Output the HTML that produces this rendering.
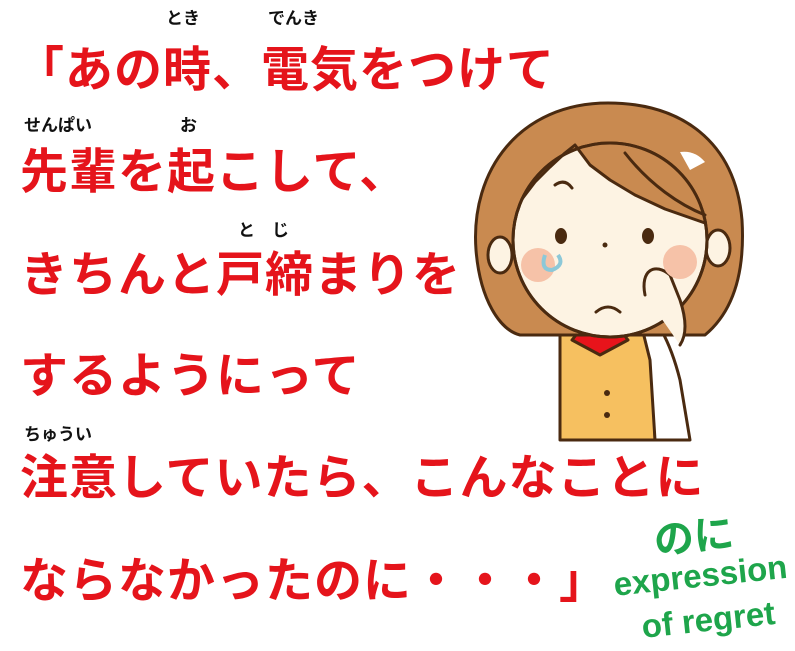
<!DOCTYPE html>
<html><head><meta charset="utf-8"><style>
body{margin:0;width:795px;height:651px;background:#fff;overflow:hidden;position:relative;font-family:"Liberation Sans","Noto Sans CJK JP",sans-serif}
.l{position:absolute;left:20px;font-size:48px;font-weight:bold;color:#e5141b;white-space:nowrap;line-height:1;letter-spacing:1px}
.f{position:absolute;font-size:17px;font-weight:bold;color:#111;white-space:nowrap;line-height:1}
.g{position:absolute;color:#1ea54b;font-weight:bold;white-space:nowrap;transform:rotate(-6deg);transform-origin:left top;line-height:1}
</style></head><body>
<div class="l" style="top:47px;left:16px">「あの時、電気をつけて</div>
<div class="f" style="left:166px;top:10px">とき</div>
<div class="f" style="left:268px;top:10px">でんき</div>
<div class="l" style="top:149px">先輩を起こして、</div>
<div class="f" style="left:24px;top:117px">せんぱい</div>
<div class="f" style="left:180px;top:117px">お</div>
<div class="l" style="top:252px">きちんと戸締まりを</div>
<div class="f" style="left:238px;top:222px">と　じ</div>
<div class="l" style="top:353px">するようにって</div>
<div class="l" style="top:455px">注意していたら、こんなことに</div>
<div class="f" style="left:24px;top:426px">ちゅうい</div>
<div class="l" style="top:558px">ならなかったのに・・・」</div>
<div class="g" style="left:652px;top:522px;font-size:40px">のに</div>
<div class="g" style="left:612px;top:568px;font-size:33px">expression</div>
<div class="g" style="left:640px;top:610px;font-size:33px">of regret</div>
<svg style="position:absolute;left:0;top:0" width="795" height="651" viewBox="0 0 795 651">
<g stroke="#4a2a10" stroke-width="3" stroke-linecap="round" stroke-linejoin="round">
<path d="M560 335 L560 440 L655 440 L652 335 Z" fill="#f6c060"/>
<path d="M572 340 L600 355 L628 340 L620 330 L580 330 Z" fill="#e8141b"/>
<path d="M635 300 Q665 320 680 380 L690 440 L655 440 L650 360 Z" fill="#fff"/>
<path d="M608 103 C520 103 470 170 476 250 C480 300 500 330 520 335 L705 335 C735 310 745 270 742 220 C735 140 680 103 608 103 Z" fill="#c98a50"/>
<ellipse cx="500" cy="255" rx="12" ry="18" fill="#fdf3e3"/>
<ellipse cx="718" cy="248" rx="12" ry="18" fill="#fdf3e3"/>
<circle cx="610" cy="240" r="97" fill="#fdf3e3"/>
</g>
<polygon points="522,199 535,182 550,167 565,153 575,145 590,165 610,180 635,195 665,209 705,223 698,199 684,178 666,161 643,149 610,143 577,149 554,161 536,178" fill="#c98a50"/>
<g stroke="#4a2a10" stroke-width="3" stroke-linecap="round" stroke-linejoin="round" fill="none">
<circle cx="610" cy="240" r="97"/>
<polyline points="522,199 535,182 550,167 565,153 575,145 590,165 610,180 635,195 665,209 705,223"/>
<path d="M625 153 C650 185 680 205 705 215"/>
<path d="M645 295 C640 270 655 262 670 275 L680 300 Q690 330 680 345" fill="#fdf3e3"/>
</g>
<path d="M680 152 Q695 150 705 162 L690 170 Z" fill="#fff"/>
<circle cx="538" cy="265" r="17" fill="#f6c2a8"/>
<circle cx="680" cy="262" r="17" fill="#f6c2a8"/>
<ellipse cx="561" cy="236" rx="6" ry="8" fill="#4a2a10"/>
<ellipse cx="648" cy="236" rx="6" ry="8" fill="#4a2a10"/>
<circle cx="605" cy="245" r="2.5" fill="#4a2a10"/>
<path d="M555 185 Q565 178 572 188 M596 312 Q608 302 620 312" stroke="#4a2a10" stroke-width="3" fill="none" stroke-linecap="round"/>
<path d="M545 255 Q540 270 552 270 Q565 265 558 255" stroke="#8cc8d8" stroke-width="4" fill="none"/>
<circle cx="607" cy="393" r="3" fill="#4a2a10"/><circle cx="607" cy="415" r="3" fill="#4a2a10"/>
</svg>
</body></html>
